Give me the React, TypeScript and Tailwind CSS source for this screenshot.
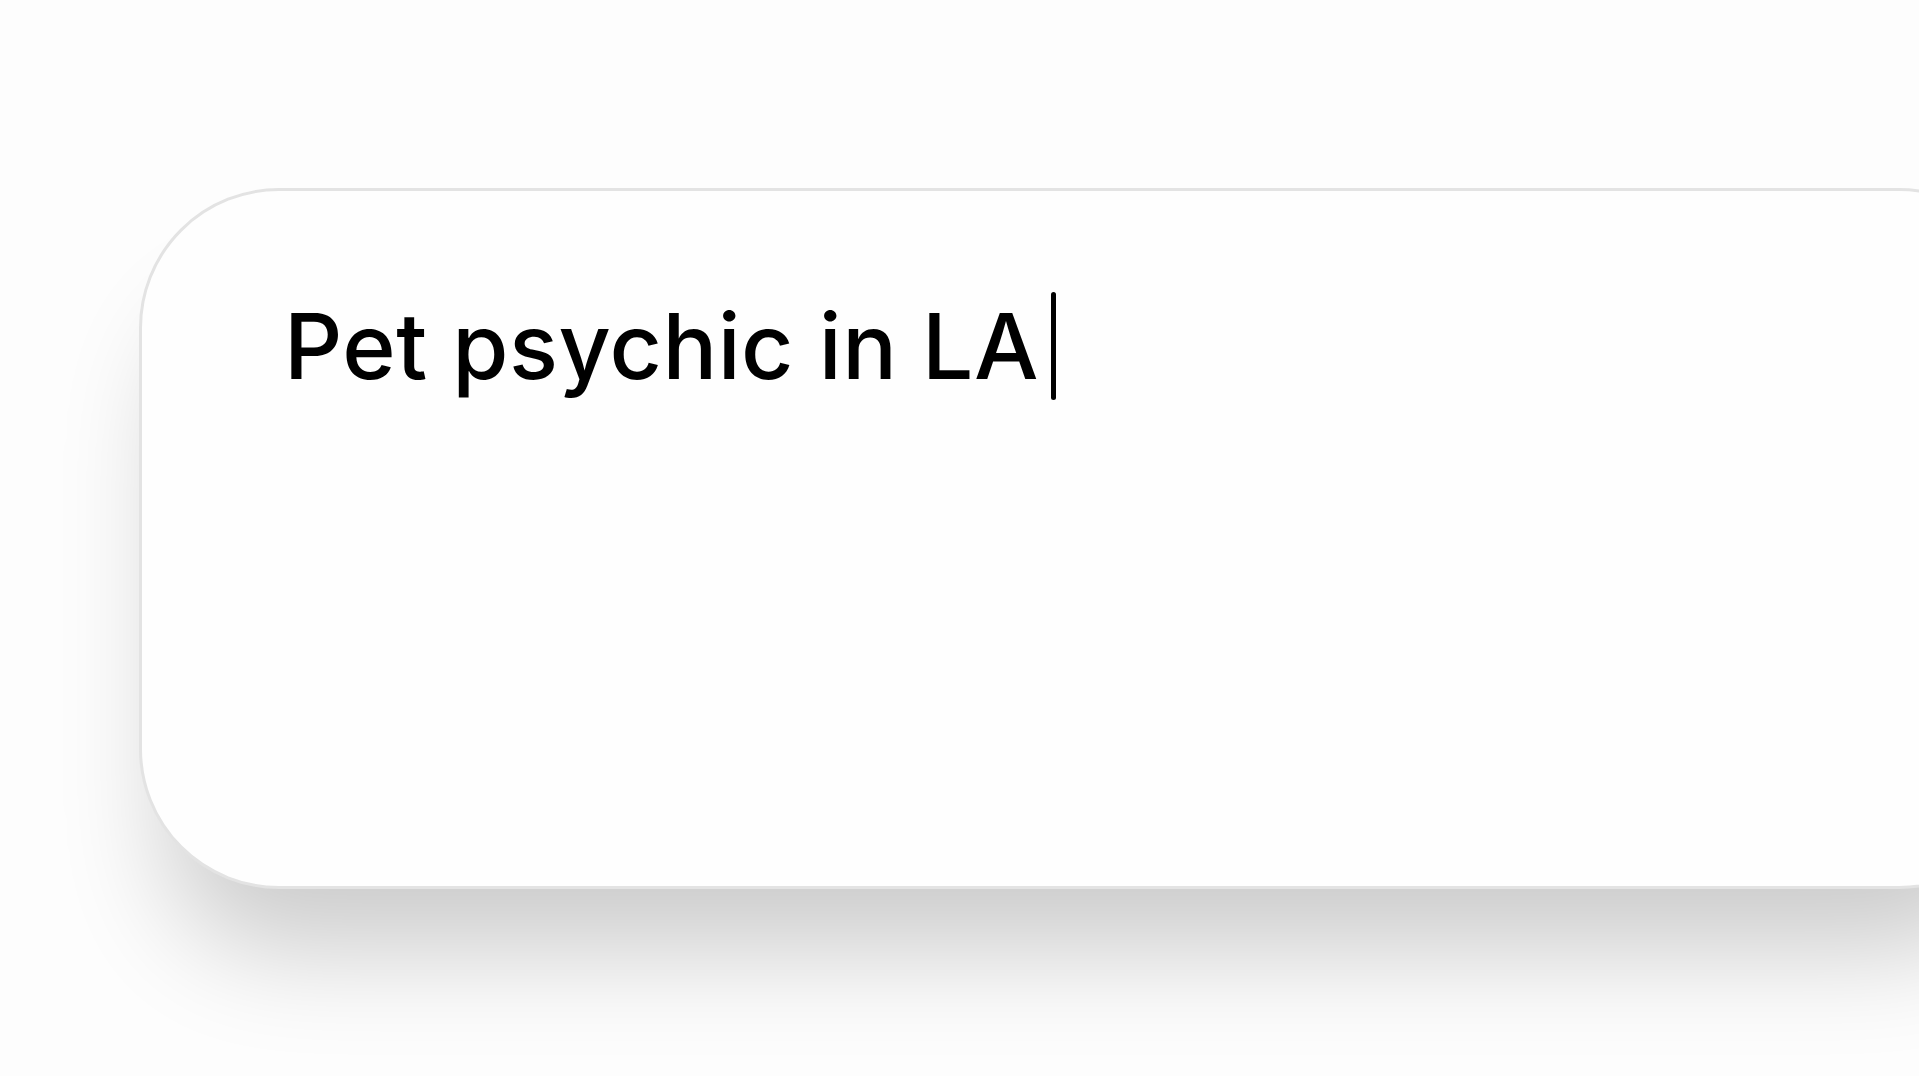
export default function App() {
  return (
    <div className="min-h-screen w-full overflow-hidden bg-[#fdfdfd] pl-[139px] pt-[188px]">
      <div className="h-[701px] w-[1900px] rounded-[140px] border-[3px] border-[#e3e3e3] bg-[#fefefe] shadow-[0_90px_110px_-30px_rgba(0,0,0,0.2)]">
        <div
          className="flex items-center pl-[142px] pt-[101px] text-[91px] font-medium leading-none text-black"
          style={{ fontFamily: "Inter, 'Noto Sans', sans-serif" }}
        >
          <span className="tracking-[0.005em]">Pet psychic in LA</span>
          <span className="ml-[12px] inline-block h-[108px] w-[5px] rounded-full bg-black" />
        </div>
      </div>
    </div>
  );
}
